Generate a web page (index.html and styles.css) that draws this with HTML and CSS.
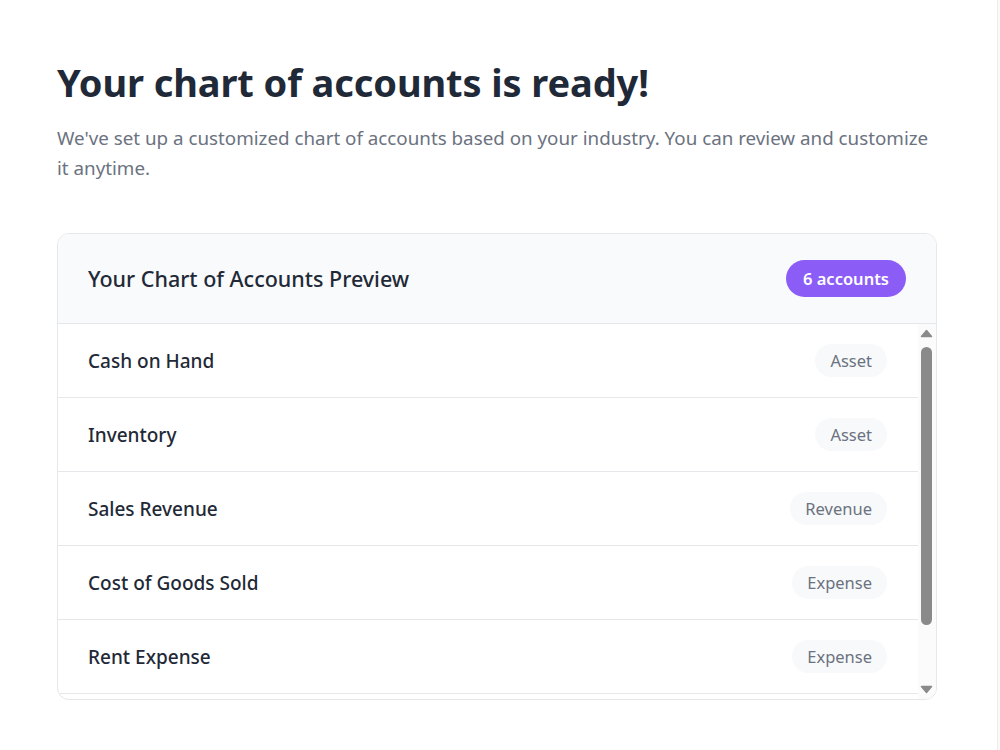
FILE: index.html
```html
<!DOCTYPE html>
<html lang="en">
<head>
    <meta charset="UTF-8">
    <meta name="viewport" content="width=device-width, initial-scale=1.0">
    <title>Chart of Accounts</title>
    <link rel="stylesheet" href="styles.css">
</head>
<body>
    <div class="layout">
        <main class="main">
            <h1>Your chart of accounts is ready!</h1>
            <p class="intro">We've set up a customized chart of accounts based on your industry. You can review and customize it anytime.</p>

            <div class="preview-card">
                <div class="preview-header">
                    <h3>Your Chart of Accounts Preview</h3>
                    <span class="count-badge">6 accounts</span>
                </div>
                <div class="list-body">
                    <ul class="account-list">
                        <li class="account-row">
                            <span class="account-name">Cash on Hand</span>
                            <span class="account-type">Asset</span>
                        </li>
                        <li class="account-row">
                            <span class="account-name">Inventory</span>
                            <span class="account-type">Asset</span>
                        </li>
                        <li class="account-row">
                            <span class="account-name">Sales Revenue</span>
                            <span class="account-type">Revenue</span>
                        </li>
                        <li class="account-row">
                            <span class="account-name">Cost of Goods Sold</span>
                            <span class="account-type">Expense</span>
                        </li>
                        <li class="account-row">
                            <span class="account-name">Rent Expense</span>
                            <span class="account-type">Expense</span>
                        </li>
                        <li class="account-row">
                            <span class="account-name">Owner's Equity</span>
                            <span class="account-type">Equity</span>
                        </li>
                    </ul>
                    <div class="scrollbar">
                        <svg class="scroll-arrow" width="18" height="17" viewBox="0 0 18 17">
                            <path d="M8.5 6.5 L13.5 12.5 L3.5 12.5 Z" fill="#8a8a8a" stroke="#8a8a8a" stroke-width="1.5" stroke-linejoin="round"/>
                        </svg>
                        <div class="scroll-track">
                            <div class="scroll-thumb"></div>
                        </div>
                        <svg class="scroll-arrow" width="18" height="17" viewBox="0 0 18 17">
                            <path d="M3.5 4.5 L13.5 4.5 L8.5 10.5 Z" fill="#8a8a8a" stroke="#8a8a8a" stroke-width="1.5" stroke-linejoin="round"/>
                        </svg>
                    </div>
                </div>
            </div>
        </main>
        <aside class="side"></aside>
    </div>
</body>
</html>
```

FILE: styles.css
```css
body {
    font-family: 'Noto Sans', 'Open Sans', sans-serif;
    color: #1f2937;
    margin: 0;
    background-color: #fafafa;
}
.layout {
    display: flex;
    min-height: 100vh;
}
.main {
    width: 880px;
    padding: 58px 60px 40px 57px;
    background-color: #fff;
    border-right: 1px solid #ececec;
}
.side {
    flex: 1;
}
h1 {
    margin: 0 0 17px;
    font-size: 38px;
    line-height: 48px;
    font-weight: 700;
    letter-spacing: -0.1px;
    color: #1f2937;
}
.intro {
    margin: 0 0 50px;
    font-size: 18.8px;
    line-height: 30px;
    color: #6b7280;
}
.preview-card {
    border: 1px solid #e5e7eb;
    border-radius: 12px;
    overflow: hidden;
}
.preview-header {
    display: flex;
    justify-content: space-between;
    align-items: center;
    height: 89px;
    padding: 0 30px;
    background-color: #f9fafb;
    border-bottom: 1px solid #e5e7eb;
}
.preview-header h3 {
    margin: 0;
    font-size: 21.5px;
    font-weight: 500;
}
.count-badge {
    background-color: #8b5cf6;
    color: #fff;
    font-size: 16.5px;
    font-weight: 600;
    line-height: 23px;
    padding: 7px 17px;
    border-radius: 999px;
}
.list-body {
    display: flex;
    height: 375px;
}
.account-list {
    flex: 1;
    list-style: none;
    margin: 0;
    padding: 0;
    overflow: hidden;
}
.scrollbar {
    width: 18px;
    display: flex;
    flex-direction: column;
    background-color: #fbfbfb;
}
.scroll-arrow {
    display: block;
    flex-shrink: 0;
}
.scroll-track {
    flex: 1;
    padding: 6px 4px 0 3px;
}
.scroll-thumb {
    height: 278px;
    background-color: #8a8a8a;
    border-radius: 6px;
}
.account-row {
    display: flex;
    justify-content: space-between;
    align-items: center;
    height: 73px;
    padding: 0 31px 0 30px;
    border-bottom: 1px solid #e5e7eb;
}
.account-name {
    font-size: 19px;
    font-weight: 500;
}
.account-type {
    background-color: #f8f9fb;
    color: #6b7280;
    font-size: 16.5px;
    line-height: 23px;
    padding: 5px 15px;
    border-radius: 999px;
}
```
